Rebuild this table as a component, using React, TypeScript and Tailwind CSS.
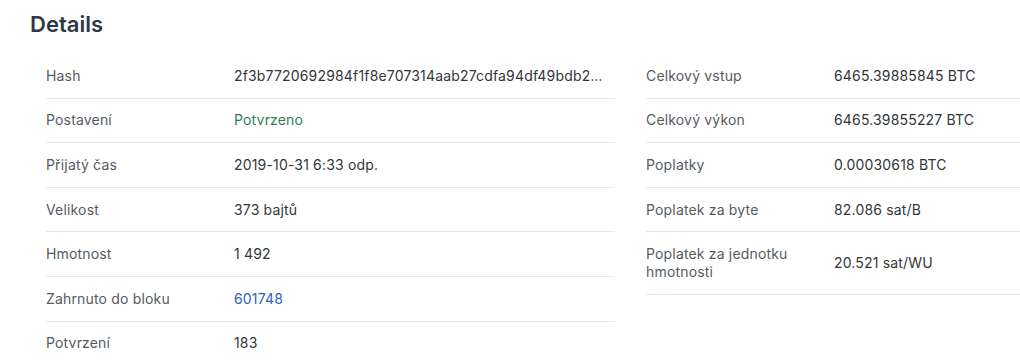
const left = [
  { label: "Hash", value: "2f3b7720692984f1f8e707314aab27cdfa94df49bdb2f6a0c8b4e1ed0a1d3a9b" },
  { label: "Postavení", value: "Potvrzeno", tone: "green" },
  { label: "Přijatý čas", value: "2019-10-31 6:33 odp." },
  { label: "Velikost", value: "373 bajtů" },
  { label: "Hmotnost", value: "1 492" },
  { label: "Zahrnuto do bloku", value: "601748", tone: "blue" },
  { label: "Potvrzení", value: "183" },
];

const right = [
  { label: "Celkový vstup", value: "6465.39885845 BTC" },
  { label: "Celkový výkon", value: "6465.39855227 BTC" },
  { label: "Poplatky", value: "0.00030618 BTC" },
  { label: "Poplatek za byte", value: "82.086 sat/B" },
  { label: "Poplatek za jednotku hmotnosti", value: "20.521 sat/WU" },
];

type Row = { label: string; value: string; tone?: string };

const DetailTable = ({ rows }: { rows: Row[] }) => (
  <div className="w-[569px] shrink-0">
    {rows.map((row) => (
      <div
        key={row.label}
        className="flex items-center border-b border-[#e6e8eb] py-[12.8px] leading-[18px]"
      >
        <div className="w-[188px] shrink-0 pr-4 text-[#555b63]">{row.label}</div>
        <div
          className={
            "min-w-0 flex-1 truncate pr-2 " +
            (row.tone === "green"
              ? "text-[#2f7d5a]"
              : row.tone === "blue"
                ? "text-[#2f62b8]"
                : "text-[#333639]")
          }
        >
          {row.value}
        </div>
      </div>
    ))}
  </div>
);

export default function App() {
  return (
    <div
      className="h-[362px] w-[1020px] overflow-hidden bg-white text-[14px] tracking-[0.012em]"
      style={{ fontFamily: "Inter, 'Noto Sans', sans-serif" }}
    >
      <h2 className="px-[30px] pt-[10px] text-[22px] font-semibold leading-[28px] tracking-normal text-[#2d3748]">
        Details
      </h2>
      <div className="mt-[16px] flex gap-[31px] pl-[46px]">
        <DetailTable rows={left} />
        <DetailTable rows={right} />
      </div>
    </div>
  );
}
